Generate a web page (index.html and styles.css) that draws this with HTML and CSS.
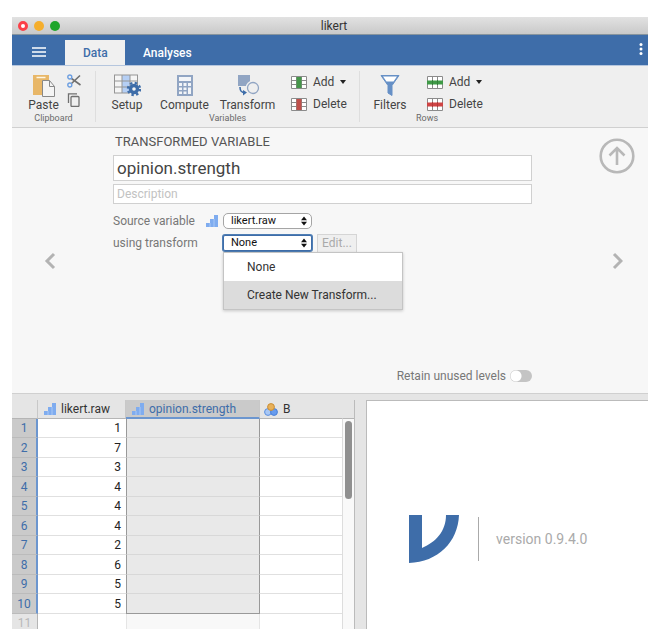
FILE: index.html
```html
<!DOCTYPE html>
<html lang="en">
<head>
<meta charset="utf-8">
<title>likert</title>
<meta name="viewport" content="width=device-width, initial-scale=1">
<link rel="stylesheet" href="styles.css">
</head>
<body>
<svg class="defs" aria-hidden="true">
  <symbol id="ordinal" viewBox="0 0 12 12"><path d="M0 8h4v4H0zM4 4h4v8H4zM8 0h4v12H8z" fill="#7facef"/><path d="M4 8v4M8 4v8" stroke="#a9c8f6"/></symbol>
  <symbol id="updown" viewBox="0 0 6 10"><path d="M3 .5l3 3.800H0zM3 9.500l3-3.800H0z" fill="#111"/></symbol>
</svg>
<div class="window">
  <header class="titlebar">
    <span class="lights"><i class="light close"></i><i class="light minimise"></i><i class="light zoom"></i></span>
    <span class="title">likert</span>
  </header>

  <nav class="tabs">
    <button class="menu-button" aria-label="Menu"><svg width="14" height="10" viewBox="0 0 14 10"><path d="M0 1h14M0 5h14M0 9h14" stroke="#fff" stroke-width="1.500"/></svg></button>
    <button class="tab active">Data</button>
    <button class="tab">Analyses</button>
    <button class="more" aria-label="Options"><svg width="4" height="12" viewBox="0 0 4 12"><g fill="#fff"><circle cx="2" cy="1.500" r="1.500"/><circle cx="2" cy="6" r="1.500"/><circle cx="2" cy="10.500" r="1.500"/></g></svg></button>
  </nav>

  <section class="ribbon">
    <div class="group clipboard">
      <div class="tools">
        <button class="tool paste">
          <svg width="24" height="24" viewBox="0 0 24 24"><path d="M1 2h16v20H1z" fill="#e8b768"/><path d="M4.500 4.500h9" stroke="#fff6e2" stroke-width="1.500"/><path d="M10.500 7.500h7l5 6v10h-12z" fill="#f4f4f4" stroke="#888"/><path d="M17.500 7.500v6h5" fill="none" stroke="#888"/></svg>
          <span>Paste</span>
        </button>
        <div class="stack">
          <button class="mini" aria-label="Cut"><svg width="14" height="14" viewBox="0 0 14 14" fill="none"><path d="M4.500 4.500l9 6.500M4.500 9.500l8.500-8" stroke="#707070" stroke-width="1.600"/><circle cx="2.800" cy="3" r="2" stroke="#6c9ee0" stroke-width="1.400"/><circle cx="2.800" cy="11" r="2" stroke="#6c9ee0" stroke-width="1.400"/></svg></button>
          <button class="mini" aria-label="Copy"><svg width="14" height="14" viewBox="0 0 14 14" fill="none" stroke="#707070" stroke-width="1.300"><path d="M1.500 10V.8H10"/><rect x="4" y="3.500" width="8" height="10" rx="1"/></svg></button>
        </div>
      </div>
      <div class="caption">Clipboard</div>
    </div>

    <div class="group variables">
      <div class="tools">
        <button class="tool setup">
          <svg width="28" height="24" viewBox="0 0 28 24"><path d="M1 2h24v18H1z" fill="#f5f5f5"/><path d="M9 2h8v18H9z" fill="#b5cff5"/><path d="M1.500 2v18M9 2v18M17 2v18M24.500 2v11M1 2h24M1 8h24M1 14h18M1 20h16" stroke="#959595" fill="none"/><circle cx="21" cy="16" r="3.500" fill="none" stroke="#3e6da9" stroke-width="3.400"/><circle cx="21" cy="16" r="6" fill="none" stroke="#3e6da9" stroke-width="2.400" stroke-dasharray="2.360 2.350"/></svg>
          <span>Setup</span>
        </button>
        <button class="tool compute">
          <svg width="24" height="24" viewBox="0 0 24 24"><path d="M4 2h16v21H4z" fill="#91a5c3"/><path d="M6 4h12v4H6zM6 10h3v3H6zM10.500 10h3v3h-3zM15 10h3v3h-3zM6 14.500h3v2.500H6zM10.500 14.500h3v2.500h-3zM6 18.500h3v2.500H6zM10.500 18.500h3v2.500h-3zM15 14.500h3v6.500h-3z" fill="#f3f5f8"/></svg>
          <span>Compute</span>
        </button>
        <button class="tool transform">
          <svg width="24" height="24" viewBox="0 0 24 24"><path d="M2 2h12v11H2z" fill="#91a5c3"/><circle cx="17" cy="15" r="6" fill="#efefef" stroke="#efefef" stroke-width="3"/><circle cx="17" cy="15" r="5.500" fill="#efefef" stroke="#91a5c3" stroke-width="1.300"/><path d="M4 14c0 4 1 5.500 5 5.500" fill="none" stroke="#3e6da9" stroke-width="1.600"/><path d="M7 17l4 2.500-4 3z" fill="#3e6da9"/></svg>
          <span>Transform</span>
        </button>
        <div class="stack wide">
          <button class="row-tool"><svg width="16" height="13" viewBox="0 0 16 13"><path d="M.5.5h15v12H.5z" fill="#fff"/><path d="M.5.5h15v12H.5zM.5 4.500h15M.5 8.500h15M5.500 0v13M10.500 0v13" fill="none" stroke="#8b8b8b"/><path d="M5.500 1h5v11h-5z" fill="#45964a"/></svg>Add<i class="caret"></i></button>
          <button class="row-tool"><svg width="16" height="13" viewBox="0 0 16 13"><path d="M.5.5h15v12H.5z" fill="#fff"/><path d="M.5.5h15v12H.5zM.5 4.500h15M.5 8.500h15M5.500 0v13M10.500 0v13" fill="none" stroke="#8b8b8b"/><path d="M5.500 1h5v11h-5z" fill="#c0504b"/></svg>Delete</button>
        </div>
      </div>
      <div class="caption">Variables</div>
    </div>

    <div class="group rows">
      <div class="tools">
        <button class="tool filters">
          <svg width="24" height="24" viewBox="0 0 24 24"><path d="M3 2.500h18l-7 10v10l-4-2.500v-7.500z" fill="#6690c6" stroke="#6690c6"/><path d="M5 3.500h14l-3.500 5h-7z" fill="#fff"/></svg>
          <span>Filters</span>
        </button>
        <div class="stack wide">
          <button class="row-tool"><svg width="16" height="13" viewBox="0 0 16 13"><path d="M.5.5h15v12H.5z" fill="#fff"/><path d="M.5.5h15v12H.5zM5.500 0v13M10.500 0v13" fill="none" stroke="#8b8b8b"/><path d="M0 4.500h16v4H0z" fill="#3f9a47"/><path d="M5.500 4v5M10.500 4v5" stroke="#35803b"/></svg>Add<i class="caret"></i></button>
          <button class="row-tool"><svg width="16" height="13" viewBox="0 0 16 13"><path d="M.5.5h15v12H.5z" fill="#fff"/><path d="M.5.5h15v12H.5zM5.500 0v13M10.500 0v13" fill="none" stroke="#8b8b8b"/><path d="M0 4.500h16v4H0z" fill="#cf4444"/><path d="M5.500 4v5M10.500 4v5" stroke="#b23a3a"/></svg>Delete</button>
        </div>
      </div>
      <div class="caption">Rows</div>
    </div>
  </section>

  <section class="editor">
    <button class="nav previous" aria-label="Previous variable"><svg width="12" height="18" viewBox="0 0 12 18"><path d="M10 2L3 9l7 7" fill="none" stroke="#b3b3b3" stroke-width="3"/></svg></button>
    <div class="form">
      <h1>TRANSFORMED VARIABLE</h1>
      <input class="name" aria-label="Variable name" value="opinion.strength">
      <input class="description" aria-label="Description" placeholder="Description">
      <div class="field">
        <label for="source">Source variable</label>
        <svg class="level" width="12" height="12"><use href="#ordinal"/></svg>
        <span class="select"><select id="source"><option>likert.raw</option></select><svg width="6" height="10"><use href="#updown"/></svg></span>
      </div>
      <div class="field">
        <label for="transform">using transform</label>
        <span class="level"></span>
        <span class="select focused"><select id="transform"><option>None</option></select><svg width="6" height="10"><use href="#updown"/></svg>
          <span class="popup"><button>None</button><button class="hover">Create New Transform...</button></span>
        </span>
        <button class="edit" disabled>Edit...</button>
      </div>
      <label class="retain">Retain unused levels <input type="checkbox" role="switch"></label>
    </div>
    <div class="side">
      <button class="up" aria-label="Close editor"><svg width="36" height="36" viewBox="0 0 36 36" fill="none" stroke="#b8b8b8" stroke-width="2.600"><circle cx="18" cy="18" r="16.300"/><path d="M18 27V10.500M10.500 17.500L18 10l7.500 7.500"/></svg></button>
      <button class="nav next" aria-label="Next variable"><svg width="12" height="18" viewBox="0 0 12 18"><path d="M3 2l7 7-7 7" fill="none" stroke="#b3b3b3" stroke-width="3"/></svg></button>
    </div>
  </section>

  <main class="content">
    <div class="sheet">
      <table>
        <colgroup><col class="c-index"><col class="c-first"><col class="c-second"><col></colgroup>
        <thead>
          <tr>
            <th class="corner"></th>
            <th><span class="head"><svg width="12" height="12"><use href="#ordinal"/></svg>likert.raw</span></th>
            <th class="selected"><span class="head"><svg width="12" height="12"><use href="#ordinal"/></svg>opinion.strength</span></th>
            <th class="last"><span class="head nominal"><svg width="14" height="13" viewBox="0 0 14 13"><circle cx="4" cy="9" r="3.400" fill="#a9c8f5" stroke="#5b8fe0"/><circle cx="10" cy="9" r="3.400" fill="#669bee" stroke="#4a7fd6"/><circle cx="7" cy="4" r="3.400" fill="#e8b15a" stroke="#c98e36"/></svg>B</span></th>
          </tr>
        </thead>
        <tbody>
          <tr><th>1</th><td>1</td><td></td><td></td></tr>
          <tr><th>2</th><td>7</td><td></td><td></td></tr>
          <tr><th>3</th><td>3</td><td></td><td></td></tr>
          <tr><th>4</th><td>4</td><td></td><td></td></tr>
          <tr><th>5</th><td>4</td><td></td><td></td></tr>
          <tr><th>6</th><td>4</td><td></td><td></td></tr>
          <tr><th>7</th><td>2</td><td></td><td></td></tr>
          <tr><th>8</th><td>6</td><td></td><td></td></tr>
          <tr><th>9</th><td>5</td><td></td><td></td></tr>
          <tr class="end"><th>10</th><td>5</td><td></td><td></td></tr>
          <tr class="empty"><th>11</th><td></td><td></td><td></td></tr>
        </tbody>
      </table>
      <div class="scroll"><div class="track"><div class="thumb"></div></div></div>
    </div>
    <div class="results">
      <svg width="50" height="48" viewBox="0 0 50 48"><path d="M0 0h13v33C27 27 37 16 37 0h13C49 27 29 47 0 48z" fill="#3e6da9"/></svg>
      <span class="version">version 0.9.4.0</span>
    </div>
  </main>
</div>
</body>
</html>
```
FILE: styles.css
```css
* { box-sizing: border-box; }

body {
  margin: 0;
  height: 100vh;
  padding: 17px 18px 11px 12px;
  background: #fff;
  color: #444;
  font: 12px/16px Roboto, "Liberation Sans", sans-serif;
}

button, input, select { font: inherit; color: inherit; }
button { margin: 0; padding: 0; border: 0; background: none; }
svg { display: block; flex: none; }
.defs { position: absolute; width: 0; height: 0; }

.window {
  display: flex;
  flex-direction: column;
  height: 100%;
  overflow: hidden;
  background: #f7f7f7;
}

/* Title bar */
.titlebar {
  display: grid;
  grid-template-columns: 60px 1fr 60px;
  align-items: center;
  flex: none;
  height: 18px;
  border-bottom: 1px solid #87949d;
  background: linear-gradient(#e2e2e2, #c9c9c9);
}
.lights { display: flex; gap: 6px; padding-left: 6px; }
.light { width: 10px; height: 10px; border-radius: 50%; }
.close { border: 3px solid #fb4048; background: #fff; }
.minimise { background: #f5ae2c; }
.zoom { background: #1ea52b; }
.title { padding-left: 8px; color: #333; text-align: center; }

/* Tabs */
.tabs {
  display: flex;
  align-items: flex-end;
  flex: none;
  height: 31px;
  border-bottom: 1px solid #b5c6de;
  background: #3e6da9;
  color: #fff;
}
.menu-button { display: grid; place-items: center; width: 53px; height: 26px; }
.tab { height: 25px; padding: 0 18px; font-weight: 500; }
.active { width: 60px; background: #f0f0f0; color: #3e6da9; }
.more { display: grid; place-items: center; width: 14px; height: 32px; }
.more { margin-left: auto; }

/* Ribbon */
.ribbon {
  display: flex;
  flex: none;
  height: 62px;
  padding: 5px 0;
  border-bottom: 1px solid #d0d0d0;
  background: #efefef;
}
.group { display: flex; flex-direction: column; border-right: 1px solid #dedede; }
.clipboard { width: 84px; }
.variables { width: 264px; }
.rows { width: 134px; border: 0; }
.tools { display: flex; }
.tool { display: flex; flex-direction: column; align-items: center; padding-top: 2px; }
.paste { width: 50px; padding-left: 13px; }
.setup { width: 62px; }
.compute { width: 53px; }
.transform { width: 73px; }
.filters { width: 60px; }
.stack { display: flex; flex-direction: column; gap: 5px; padding: 3px 0 0 5px; }
.wide { gap: 6px; padding: 3px 0 0 7px; }
.row-tool { display: flex; align-items: center; gap: 6px; height: 16px; }
.caret { border: 3px solid transparent; border-top: 4px solid #222; border-bottom: 0; }
.caption { margin-top: auto; color: #6a6a6a; font-size: 9px; line-height: 10px; text-align: center; }

/* Variable editor */
.editor {
  display: grid;
  grid-template-columns: 101px 1fr 116px;
  flex: none;
  height: 266px;
  border-bottom: 1px solid #d0d0d0;
}
.nav { display: grid; place-items: center; }
.previous { padding-right: 25px; }
.side { display: grid; grid-template-rows: 1fr; padding-left: 54px; }
.up, .next { grid-area: 1 / 1; }
.up { align-self: start; justify-self: center; padding-top: 10px; }
.form { display: flex; flex-direction: column; padding: 6px 0 9px; }
h1 { margin: 0 0 5px 2px; font-size: 13px; font-weight: 400; line-height: 16px; color: #555; }
.name, .description {
  width: 100%;
  padding: 0 3px;
  border: 1px solid #d0d0d0;
  border-radius: 0;
  background: #fff;
  outline: 0;
}
.name { height: 26px; font-size: 17px; color: #444; }
.description { height: 20px; margin: 3px 0 7px; }
.description::placeholder { color: #c2c2c2; opacity: 1; }
.field { display: flex; align-items: center; height: 20px; margin-bottom: 2px; color: #777; }
.field label { width: 93px; white-space: nowrap; }
.level { width: 12px; margin-right: 5px; }
.select { position: relative; display: flex; width: 89px; height: 16px; }
.select select {
  width: 100%;
  padding: 0 7px;
  appearance: none;
  border: 1px solid #a5a5a5;
  border-radius: 5px;
  background: #fff;
  color: #111;
  font-size: 11px;
  line-height: 14px;
  outline: 0;
}
.select > svg { position: absolute; top: 3px; right: 5px; pointer-events: none; }
.focused select { border-color: #3e6da9; border-radius: 2px; box-shadow: 0 0 0 1px #4f7eb4; }
.edit {
  width: 40px;
  height: 19px;
  margin-left: 5px;
  border: 1px solid #d5d5d5;
  background: #efefef;
  color: #aaa;
}
.popup {
  position: absolute;
  z-index: 2;
  top: 17px;
  left: 0;
  width: 180px;
  border: 1px solid #c4c4c4;
  background: #fff;
  box-shadow: 0 1px 3px #0003;
}
.popup button { display: block; width: 100%; height: 28px; padding-left: 23px; color: #333; text-align: left; }
.popup .hover { background: #dcdcdc; }
.retain {
  display: flex;
  align-items: center;
  justify-content: flex-end;
  gap: 4px;
  margin-top: auto;
  color: #777;
}
.retain input {
  width: 22px;
  height: 12px;
  margin: 0;
  appearance: none;
  border-radius: 6px;
  background: radial-gradient(circle at 6px 6px, #fff 5px, #c4c4c4 6px);
}

/* Spreadsheet */
.content { display: flex; flex: 1; min-height: 0; padding-top: 6px; background: #e5e5e5; }
.sheet { display: flex; flex: 0 0 54%; overflow: hidden; }
table { flex: 1; table-layout: fixed; border-collapse: separate; border-spacing: 0; align-self: flex-start; }
.c-index { width: 26px; }
.c-first { width: 88px; }
.c-second { width: 134px; }
th, td { height: 19px; padding: 0; font-weight: 400; line-height: 16px; }
tbody tr:nth-child(even) > * { height: 20px; }
thead th { border-right: 1px solid #c8c8c8; border-bottom: 1px solid #b5b5b5; color: #333; }
thead .selected { border-bottom: 2px solid #6c96cf; background: #cacaca; color: #3e6da9; }
thead .last { border-right: 0; }
.head { display: flex; align-items: center; gap: 5px; padding-left: 6px; }
.nominal { padding-left: 4px; }
tbody th {
  border-right: 2px solid #6c96cf;
  border-bottom: 1px solid #bbb;
  background: #cacaca;
  color: #3e6da9;
}
td { padding-right: 5px; border-bottom: 1px solid #e0e0e0; background: #fff; color: #222; text-align: right; }
td:nth-child(3) {
  border-right: 1px solid #999;
  border-left: 1px solid #999;
  border-bottom-color: #d8d8d8;
  background: #e9e9e9;
}
.end td:nth-child(3) { border-bottom-color: #999; }
.empty th { border-right: 1px solid #b5b5b5; background: #e5e5e5; color: #b8b8b8; }
.empty td:nth-child(3) { border-color: #e5e5e5; background: #f8f8f8; }
.scroll { display: flex; flex: 0 0 12px; padding-top: 18px; border-right: 1px solid #bbb; }
.track { flex: 1; padding: 2px; border-top: 1px solid #b5b5b5; border-left: 1px solid #ddd; background: #f9f9f9; }
.thumb { width: 7px; height: 78px; border-radius: 4px; background: #909090; }

/* Results */
.results {
  display: flex;
  align-items: center;
  justify-content: center;
  flex: 1;
  margin-left: 11px;
  padding: 48px 19px 0 0;
  border: 1px solid #bbb;
  border-width: 1px 0 0 1px;
  background: #fff;
}
.version {
  margin-left: 19px;
  padding: 14px 0 14px 17px;
  border-left: 1px solid #aaa;
  color: #aaa;
  font-size: 14px;
}
```
